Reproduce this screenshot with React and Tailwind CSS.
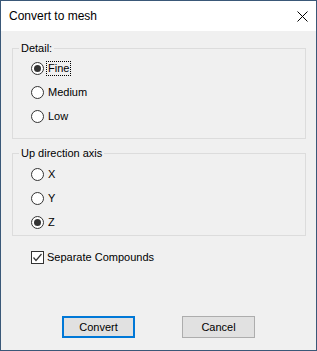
import React from 'react';

const font = { fontFamily: '"Liberation Sans", Arial, sans-serif' };

function Radio({ label, checked, focused }) {
  return (
    <div className="flex items-center h-[24px] pl-[18px]">
      <span className="w-[13px] h-[13px] rounded-full border border-[#333333] bg-white flex items-center justify-center shrink-0">
        {checked && <span className="w-[7px] h-[7px] rounded-full bg-[#333333]" />}
      </span>
      <span
        className={
          'ml-[2px] px-[1px] leading-[13px] border ' +
          (focused ? 'border-dotted border-black' : 'border-transparent')
        }
      >
        {label}
      </span>
    </div>
  );
}

function Group({ title, children, className }) {
  return (
    <fieldset className={'border border-[#dcdcdc] ml-[11px] w-[294px] px-0 pb-0 ' + className}>
      <legend className="ml-[6px] px-[2px] leading-[16px]">{title}</legend>
      {children}
    </fieldset>
  );
}

export default function App() {
  return (
    <div
      className="w-[317px] h-[351px] border border-[#3a5878] bg-[#f0f0f0] flex flex-col text-[11px] text-black"
      style={font}
    >
      <div className="h-[30px] bg-white flex items-center justify-between pl-[8px] pr-[8px] shrink-0">
        <span className="text-[12px] leading-[16px]">Convert to mesh</span>
        <svg width="11" height="11" viewBox="0 0 11 11">
          <path d="M0.5 0.5 L10.5 10.5 M10.5 0.5 L0.5 10.5" stroke="#000" strokeWidth="1" />
        </svg>
      </div>

      <Group title="Detail:" className="mt-[9px] h-[99px]">
        <div>
          <Radio label="Fine" checked focused />
          <Radio label="Medium" />
          <Radio label="Low" />
        </div>
      </Group>

      <Group title="Up direction axis" className="mt-[6px] h-[91px]">
        <div className="pt-[1px]">
          <Radio label="X" />
          <Radio label="Y" />
          <Radio label="Z" checked />
        </div>
      </Group>

      <div className="flex items-center h-[16px] mt-[13px] pl-[30px]">
        <span className="w-[13px] h-[13px] border border-[#333333] bg-white flex items-center justify-center shrink-0">
          <svg width="11" height="11" viewBox="0 0 11 11">
            <path d="M1.5 5.5 L4 8.5 L9.5 2" fill="none" stroke="#333333" strokeWidth="1.2" />
          </svg>
        </span>
        <span className="ml-[3px] leading-[14px]">Separate Compounds</span>
      </div>

      <div className="flex mt-[51px] pl-[61px] gap-[47px]">
        <button className="w-[73px] h-[22px] border-2 border-[#0078d7] bg-[#e1e1e1] leading-[16px]">
          Convert
        </button>
        <button className="w-[73px] h-[22px] border border-[#adadad] bg-[#e1e1e1] leading-[16px]">
          Cancel
        </button>
      </div>
    </div>
  );
}
